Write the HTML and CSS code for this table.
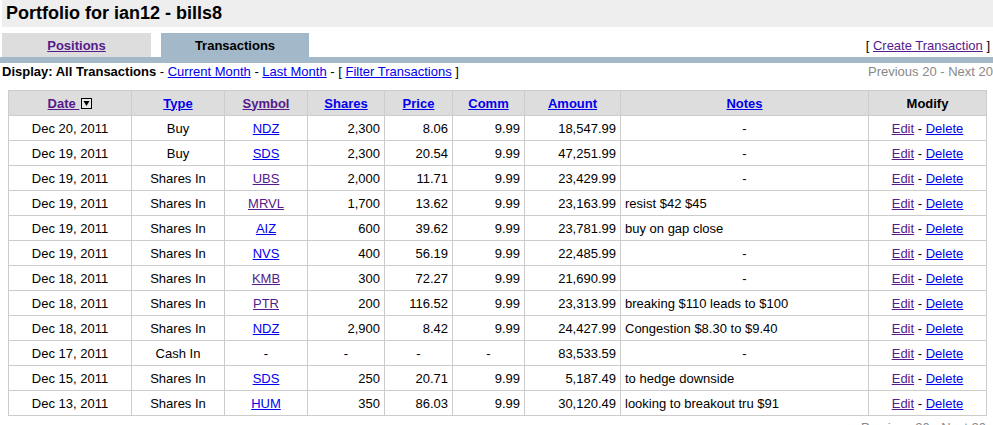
FILE: index.html
```html
<!DOCTYPE html>
<html>
<head>
<meta charset="utf-8">
<title>Portfolio for ian12 - bills8</title>
<link rel="stylesheet" href="styles.css">
</head>
<body>
<div class="title">Portfolio for ian12 - bills8</div>
<div class="tabs">
  <div class="tab tab-off"><a class="v" href="#">Positions</a></div>
  <div class="tab tab-on">Transactions</div>
  <div class="tab-right">[ <a class="v" href="#">Create Transaction</a> ]</div>
</div>
<div class="bar"></div>
<div class="display">
  <div><b>Display: All Transactions</b> - <a href="#">Current Month</a> - <a href="#">Last Month</a> - [ <a href="#">Filter Transactions</a> ]</div>
  <div class="pager">Previous 20 - Next 20</div>
</div>
<table class="tx">
  <colgroup>
    <col style="width:123px"><col style="width:93px"><col style="width:83px"><col style="width:77px"><col style="width:68px"><col style="width:72px"><col style="width:96px"><col style="width:248px"><col style="width:118px">
  </colgroup>
  <thead>
    <tr>
      <th><a class="v" href="#">Date </a><svg class="sort" width="11" height="11" viewBox="0 0 11 11"><rect x="0.5" y="0.5" width="10" height="10" fill="#e8e8e8" stroke="#000"/><polygon points="2.5,3 8.5,3 5.5,8" fill="#000"/></svg></th>
      <th><a href="#">Type</a></th>
      <th><a class="v" href="#">Symbol</a></th>
      <th><a href="#">Shares</a></th>
      <th><a href="#">Price</a></th>
      <th><a href="#">Comm</a></th>
      <th><a href="#">Amount</a></th>
      <th><a href="#">Notes</a></th>
      <th>Modify</th>
    </tr>
  </thead>
  <tbody>
    <tr><td class="c">Dec 20, 2011</td><td class="c">Buy</td><td class="c"><a href="#">NDZ</a></td><td class="r">2,300</td><td class="r">8.06</td><td class="r">9.99</td><td class="r">18,547.99</td><td class="c">-</td><td class="c"><a class="v" href="#">Edit</a> - <a href="#">Delete</a></td></tr>
    <tr><td class="c">Dec 19, 2011</td><td class="c">Buy</td><td class="c"><a href="#">SDS</a></td><td class="r">2,300</td><td class="r">20.54</td><td class="r">9.99</td><td class="r">47,251.99</td><td class="c">-</td><td class="c"><a class="v" href="#">Edit</a> - <a href="#">Delete</a></td></tr>
    <tr><td class="c">Dec 19, 2011</td><td class="c">Shares In</td><td class="c"><a class="v" href="#">UBS</a></td><td class="r">2,000</td><td class="r">11.71</td><td class="r">9.99</td><td class="r">23,429.99</td><td class="c">-</td><td class="c"><a class="v" href="#">Edit</a> - <a href="#">Delete</a></td></tr>
    <tr><td class="c">Dec 19, 2011</td><td class="c">Shares In</td><td class="c"><a class="v" href="#">MRVL</a></td><td class="r">1,700</td><td class="r">13.62</td><td class="r">9.99</td><td class="r">23,163.99</td><td class="l">resist $42 $45</td><td class="c"><a class="v" href="#">Edit</a> - <a href="#">Delete</a></td></tr>
    <tr><td class="c">Dec 19, 2011</td><td class="c">Shares In</td><td class="c"><a href="#">AIZ</a></td><td class="r">600</td><td class="r">39.62</td><td class="r">9.99</td><td class="r">23,781.99</td><td class="l">buy on gap close</td><td class="c"><a class="v" href="#">Edit</a> - <a href="#">Delete</a></td></tr>
    <tr><td class="c">Dec 19, 2011</td><td class="c">Shares In</td><td class="c"><a href="#">NVS</a></td><td class="r">400</td><td class="r">56.19</td><td class="r">9.99</td><td class="r">22,485.99</td><td class="c">-</td><td class="c"><a class="v" href="#">Edit</a> - <a href="#">Delete</a></td></tr>
    <tr><td class="c">Dec 18, 2011</td><td class="c">Shares In</td><td class="c"><a class="v" href="#">KMB</a></td><td class="r">300</td><td class="r">72.27</td><td class="r">9.99</td><td class="r">21,690.99</td><td class="c">-</td><td class="c"><a class="v" href="#">Edit</a> - <a href="#">Delete</a></td></tr>
    <tr><td class="c">Dec 18, 2011</td><td class="c">Shares In</td><td class="c"><a class="v" href="#">PTR</a></td><td class="r">200</td><td class="r">116.52</td><td class="r">9.99</td><td class="r">23,313.99</td><td class="l">breaking $110 leads to $100</td><td class="c"><a class="v" href="#">Edit</a> - <a href="#">Delete</a></td></tr>
    <tr><td class="c">Dec 18, 2011</td><td class="c">Shares In</td><td class="c"><a href="#">NDZ</a></td><td class="r">2,900</td><td class="r">8.42</td><td class="r">9.99</td><td class="r">24,427.99</td><td class="l">Congestion $8.30 to $9.40</td><td class="c"><a class="v" href="#">Edit</a> - <a href="#">Delete</a></td></tr>
    <tr><td class="c">Dec 17, 2011</td><td class="c">Cash In</td><td class="c">-</td><td class="c">-</td><td class="c">-</td><td class="c">-</td><td class="r">83,533.59</td><td class="c">-</td><td class="c"><a class="v" href="#">Edit</a> - <a href="#">Delete</a></td></tr>
    <tr><td class="c">Dec 15, 2011</td><td class="c">Shares In</td><td class="c"><a href="#">SDS</a></td><td class="r">250</td><td class="r">20.71</td><td class="r">9.99</td><td class="r">5,187.49</td><td class="l">to hedge downside</td><td class="c"><a class="v" href="#">Edit</a> - <a href="#">Delete</a></td></tr>
    <tr><td class="c">Dec 13, 2011</td><td class="c">Shares In</td><td class="c"><a href="#">HUM</a></td><td class="r">350</td><td class="r">86.03</td><td class="r">9.99</td><td class="r">30,120.49</td><td class="l">looking to breakout tru $91</td><td class="c"><a class="v" href="#">Edit</a> - <a href="#">Delete</a></td></tr>
  </tbody>
</table>
<div class="pager bottom">Previous 20 - Next 20</div>
</body>
</html>
```
FILE: styles.css
```css
html, body {
  margin: 0;
  padding: 0;
  background: #fff;
}
body {
  font-family: "Liberation Sans", Arial, sans-serif;
  font-size: 13px;
  color: #000;
}
a {
  color: #0000ee;
  text-decoration: underline;
}
a.v {
  color: #551a8b;
}
.title {
  margin-left: 2px;
  height: 27px;
  background: #eeeeee;
  font-size: 18px;
  font-weight: bold;
  line-height: 27px;
  padding-left: 4px;
}
.tabs {
  display: flex;
  align-items: stretch;
  margin-top: 6px;
  margin-left: 2px;
  height: 24px;
}
.tab {
  font-weight: bold;
  text-align: center;
  line-height: 25px;
}
.tab-off {
  width: 149px;
  background: #dddddd;
}
.tab-on {
  width: 148px;
  margin-left: 10px;
  background: #a3b9c9;
}
.tab-right {
  margin-left: auto;
  padding-right: 3px;
  font-size: 13px;
  line-height: 26px;
}
.bar {
  height: 6px;
  background: #a3b9c9;
}
.display {
  display: flex;
  justify-content: space-between;
  margin-left: 2px;
  height: 17px;
  line-height: 17px;
}
.pager {
  color: #888888;
}
.tx {
  border-collapse: collapse;
  margin: 10px 0 0 8px;
  width: 979px;
  table-layout: fixed;
}
.tx th, .tx td {
  border: 1px solid #cccccc;
  padding: 0 4px;
  white-space: nowrap;
}
.tx th {
  background: #dddddd;
  height: 24px;
  font-weight: bold;
  text-align: center;
}
.tx td {
  height: 24px;
}
.sort {
  vertical-align: -1px;
  margin-left: 2px;
}
.c { text-align: center; }
.r { text-align: right; }
.l { text-align: left; }
.pager.bottom {
  text-align: right;
  width: 986px;
  margin-top: 4px;
}
```
